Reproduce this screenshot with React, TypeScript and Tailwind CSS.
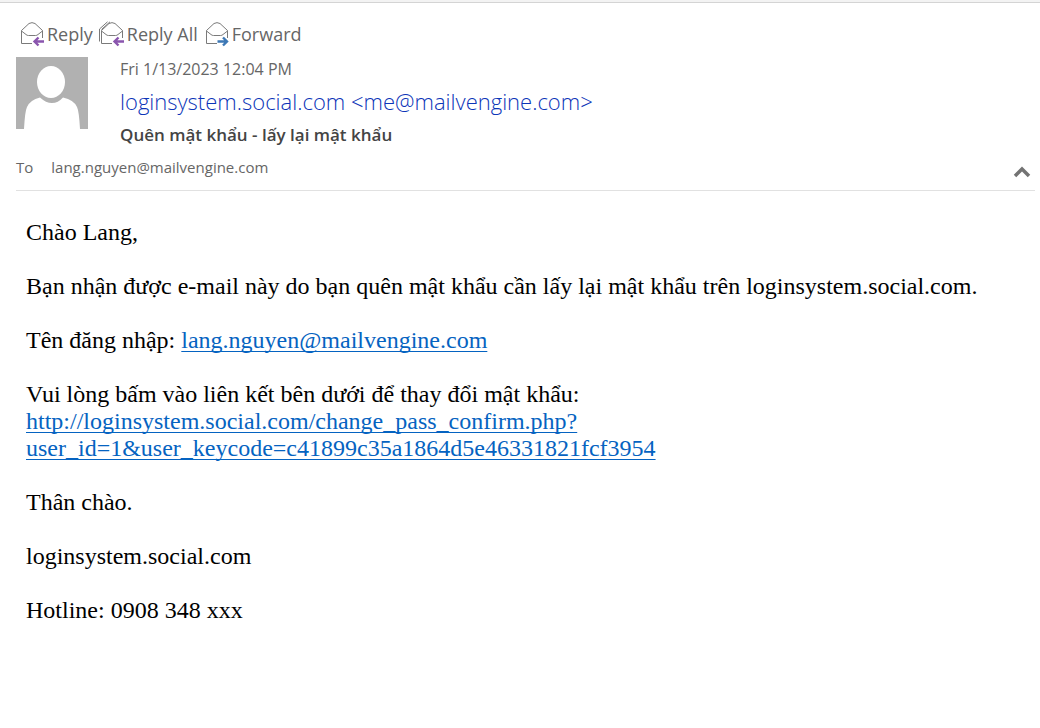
import { ReactNode } from "react"

interface EnvelopeIconProps {
  variant: "reply" | "replyAll" | "forward"
}

const EnvelopeIcon = ({ variant }: EnvelopeIconProps) => {
  const forward = variant === "forward"

  return (
    <svg
      viewBox="0 0 26 26"
      className="size-[26px] shrink-0"
      fill="none"
      aria-hidden="true"
    >
      <g stroke="#7a7a7a" strokeWidth="1">
        <path d="M13 22.5H2.5V9.5L10 2.5Q13 .8 16 2.5L23.5 9.5V17" />
        <path d="M2.5 10L7 13.5Q8 14.5 9.500 14.5H16.5Q18 14.5 19 13.5L23.5 10" />
        {variant === "replyAll" && (
          <path d="M.5 20.5V8L8.5 .8M2.5 8.5L11 .8" />
        )}
      </g>
      <path
        d={
          forward
            ? "M13.5 20.5H23M19 16.5L23 20.5L19 24.5"
            : "M25 20.5H15.5M19.5 16.5L15.5 20.5L19.5 24.5"
        }
        stroke={forward ? "#3d78b5" : "#8a55ae"}
        strokeWidth="2.4"
      />
    </svg>
  )
}

const ActionButton = ({
  variant,
  children,
}: EnvelopeIconProps & { children: ReactNode }) => (
  <button type="button" className="flex items-center gap-[2px]">
    <EnvelopeIcon variant={variant} />
    {children}
  </button>
)

const Avatar = () => (
  <svg
    viewBox="0 0 72 72"
    className="size-[72px] shrink-0"
    role="img"
    aria-label="Sender"
  >
    <path fill="#b1b1b1" d="M0 0H72V72H0z" />
    <ellipse cx="35" cy="25" rx="14" ry="16" fill="#fff" />
    <path
      fill="#fff"
      d="M8 72Q9 54 11 50Q14 43 24 40.5Q30 46 36 46Q42 46 47 40.5Q58 43 61 50Q63 54 64 72Z"
    />
  </svg>
)

const MailHeader = () => (
  <header className="ml-4 mr-[5px] border-b border-[#e1e1e1] pb-1 text-[#666666]">
    <div className="flex h-[54px] items-center gap-[6px] pl-[3px] pt-2 text-lg">
      <ActionButton variant="reply">Reply</ActionButton>
      <ActionButton variant="replyAll">Reply All</ActionButton>
      <ActionButton variant="forward">Forward</ActionButton>
    </div>
    <div className="flex items-start gap-8">
      <Avatar />
      <div>
        <p className="text-base leading-6">Fri 1/13/2023 12:04 PM</p>
        <p className="text-[22px] font-light leading-10 text-[#0c35b8]">
          loginsystem.social.com &lt;me@mailvengine.com&gt;
        </p>
        <h1 className="text-[17px] font-semibold leading-7 text-[#444444]">
          Quên mật khẩu - lấy lại mật khẩu
        </h1>
      </div>
    </div>
    <div className="flex h-[37px] items-center gap-[18px] text-[15px]">
      <span>To</span>
      <span className="grow">lang.nguyen@mailvengine.com</span>
      <button type="button" aria-label="Collapse header" className="pr-1 pt-2">
        <svg viewBox="0 0 18 12" className="h-3 w-[18px]" fill="none">
          <path d="M2 10L9 3L16 10" stroke="#737373" strokeWidth="3.5" />
        </svg>
      </button>
    </div>
  </header>
)

const MailLink = ({ href }: { href: string }) => (
  <a
    href={href}
    className="text-[#0563c1] underline decoration-1 underline-offset-3 [text-decoration-skip-ink:none]"
  >
    {href.replace("mailto:", "")}
  </a>
)

const MailBody = () => (
  <article className="flex flex-col gap-[27px] px-[26px] py-7 font-['Liberation_Serif',serif] text-2xl leading-[27px] text-black">
    <p>Chào Lang,</p>
    <p>
      Bạn nhận được e-mail này do bạn quên mật khẩu cần lấy lại mật khẩu trên
      loginsystem.social.com.
    </p>
    <p>
      Tên đăng nhập: <MailLink href="mailto:lang.nguyen@mailvengine.com" />
    </p>
    <p>
      Vui lòng bấm vào liên kết bên dưới để thay đổi mật khẩu:
      <br />
      <MailLink href="http://loginsystem.social.com/change_pass_confirm.php?user_id=1&user_keycode=c41899c35a1864d5e46331821fcf3954" />
    </p>
    <p>Thân chào.</p>
    <p>loginsystem.social.com</p>
    <p>Hotline: 0908 348 xxx</p>
  </article>
)

const App = () => {
  return (
    <main className="min-h-screen bg-white font-['Open_Sans',sans-serif]">
      <div className="h-[3px] border-b border-[#d4d4d4] bg-[#f3f3f3]" />
      <MailHeader />
      <MailBody />
    </main>
  )
}

export default App
